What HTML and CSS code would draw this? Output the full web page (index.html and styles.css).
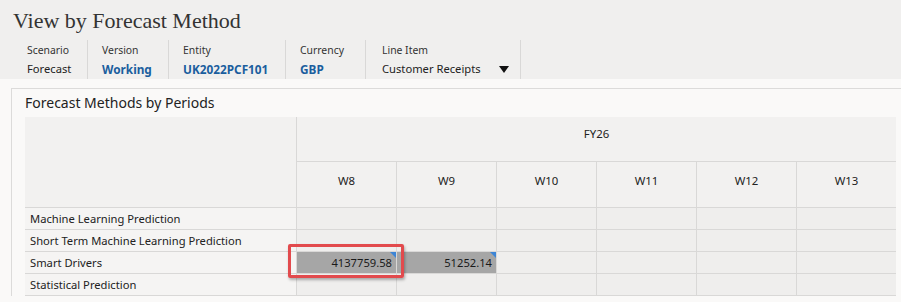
FILE: index.html
```html
<!DOCTYPE html>
<html lang="en">
<head>
<meta charset="utf-8">
<title>View by Forecast Method</title>
<link rel="stylesheet" href="styles.css">
</head>
<body>
<header class="top">
  <h1 class="title">View by Forecast Method</h1>
  <div class="pov">
    <div class="pov-item w-scenario">
      <div class="pov-label">Scenario</div>
      <div class="pov-value">Forecast</div>
    </div>
    <div class="pov-item w-version">
      <div class="pov-label">Version</div>
      <div class="pov-value link">Working</div>
    </div>
    <div class="pov-item w-entity">
      <div class="pov-label">Entity</div>
      <div class="pov-value link">UK2022PCF101</div>
    </div>
    <div class="pov-item w-currency">
      <div class="pov-label">Currency</div>
      <div class="pov-value link">GBP</div>
    </div>
    <div class="pov-item w-line">
      <div class="pov-label">Line Item</div>
      <div class="pov-value select">Customer Receipts <span class="caret"></span></div>
    </div>
  </div>
</header>

<section class="panel">
  <h2 class="panel-title">Forecast Methods by Periods</h2>
  <div class="grid">
    <div class="corner"></div>
    <div class="hdr year">FY26</div>
    <div class="hdr period">W8</div>
    <div class="hdr period">W9</div>
    <div class="hdr period">W10</div>
    <div class="hdr period">W11</div>
    <div class="hdr period">W12</div>
    <div class="hdr period">W13</div>

    <div class="rowhdr">Machine Learning Prediction</div>
    <div class="cell"></div><div class="cell"></div><div class="cell"></div><div class="cell"></div><div class="cell"></div><div class="cell"></div>

    <div class="rowhdr">Short Term Machine Learning Prediction</div>
    <div class="cell"></div><div class="cell"></div><div class="cell"></div><div class="cell"></div><div class="cell"></div><div class="cell"></div>

    <div class="rowhdr">Smart Drivers</div>
    <div class="cell filled highlighted">4137759.58<span class="callout"></span></div>
    <div class="cell filled">51252.14</div>
    <div class="cell"></div><div class="cell"></div><div class="cell"></div><div class="cell"></div>

    <div class="rowhdr">Statistical Prediction</div>
    <div class="cell"></div><div class="cell"></div><div class="cell"></div><div class="cell"></div><div class="cell"></div><div class="cell"></div>
  </div>
</section>
</body>
</html>
```

FILE: styles.css
```css
* { box-sizing: border-box; }

html, body {
  margin: 0;
  padding: 0;
}

body {
  background: #faf9f8;
  font-family: "Noto Sans", "Open Sans", sans-serif;
  color: #222;
  width: 901px;
  height: 302px;
  overflow: hidden;
}

.top {
  background: #f0efee;
  height: 79px;
  padding: 8px 0 0 13px;
}

.title {
  margin: 0;
  font-family: "Liberation Serif", "DejaVu Serif", serif;
  font-weight: normal;
  font-size: 22px;
  line-height: 26px;
  color: #333;
}

.pov {
  display: flex;
  margin-top: 6px;
  height: 39px;
}

.pov-item {
  border-right: 1px solid #d9d8d7;
  padding-left: 14px;
  padding-top: 2px;
  white-space: nowrap;
}

.w-scenario { width: 75px; }
.w-version  { width: 81px; }
.w-entity   { width: 117px; }
.w-currency { width: 80px; }
.w-line     { width: 155px; padding-left: 16px; }

.pov-label {
  font-size: 10.4px;
  line-height: 16px;
  color: #333;
}

.pov-value {
  font-size: 11.2px;
  line-height: 18px;
  margin-top: 2px;
  color: #222;
}

.pov-value.link {
  color: #1b5e9e;
  font-weight: bold;
  font-size: 11.8px;
}

.pov-value.select {
  display: flex;
  align-items: center;
}

.caret {
  width: 0;
  height: 0;
  border-left: 5px solid transparent;
  border-right: 5px solid transparent;
  border-top: 7px solid #111;
  margin-left: 18px;
}

.panel {
  margin: 9px 0 0 11px;
  border-top: 1px solid #dcdbda;
  border-left: 1px solid #dcdbda;
  padding: 3px 0 0 13px;
  background: #faf9f8;
}

.panel-title {
  margin: 0;
  font-size: 14px;
  font-weight: normal;
  line-height: 22px;
  color: #222;
}

.grid {
  display: grid;
  grid-template-columns: 271px repeat(6, 99px);
  grid-template-rows: 44px 45px repeat(4, 21px);
  gap: 1px;
  width: 871px;
  margin-top: 3px;
  background: #d9d8d7;
  border-bottom: 1px solid #d9d8d7;
}

.corner {
  grid-row: 1 / span 2;
  background: #f2f1f0;
}

.hdr {
  background: #f2f1f0;
  font-size: 11.4px;
  color: #222;
  display: flex;
  justify-content: center;
}

.year {
  grid-column: 2 / span 6;
  align-items: flex-start;
  padding-top: 9px;
}

.period {
  align-items: center;
  padding-bottom: 9px;
}

.rowhdr {
  background: #f5f4f3;
  font-size: 11.2px;
  line-height: 21px;
  padding-left: 5px;
  color: #222;
  white-space: nowrap;
}

.cell {
  background: #efeeed;
  font-size: 11.2px;
  line-height: 21px;
  text-align: right;
  padding-right: 4px;
  position: relative;
}

.cell.filled {
  background: #a6a6a6;
  color: #1a1a1a;
}

.cell.filled::after {
  content: "";
  position: absolute;
  top: 0;
  right: 0;
  border-top: 6px solid #3d85d6;
  border-left: 6px solid transparent;
}

.callout {
  position: absolute;
  left: -9px;
  top: -8px;
  right: -8px;
  bottom: -5px;
  border: 3px solid #e24a4d;
  border-radius: 2px;
  box-shadow: 1px 2px 3px rgba(0, 0, 0, 0.3);
  z-index: 2;
}
```
